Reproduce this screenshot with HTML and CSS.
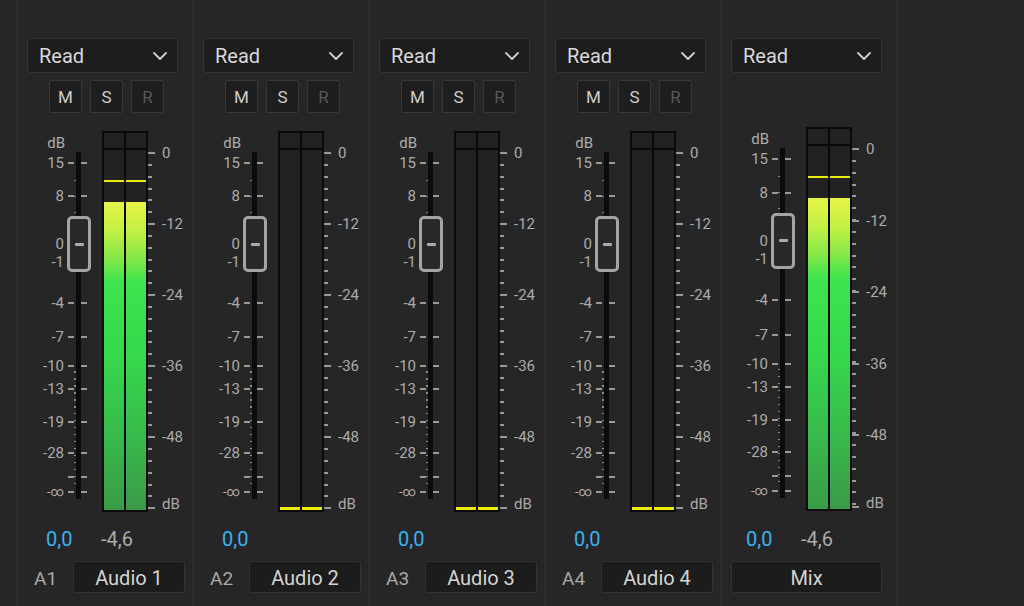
FILE: index.html
```html
<!DOCTYPE html>
<html lang="en">
<head>
<meta charset="utf-8">
<title>Audio Track Mixer</title>
<link rel="stylesheet" href="styles.css">
</head>
<body>
<div class="mixer">
  <div class="gutter"></div>

  <!-- Audio 1 -->
  <section class="channel">
    <div class="mode"><span>Read</span><svg class="chev" width="14" height="8" viewBox="0 0 14 8"><polyline points="1,1 7,7 13,1"/></svg></div>
    <div class="msr"><span class="btn">M</span><span class="btn">S</span><span class="btn dim">R</span></div>
    <div class="strip">
      <span class="fdb">dB</span>
      <i class="dots d1"></i><i class="dots d2"></i>
      <div class="fm p15"><span>15</span></div>
      <div class="fm p8"><span>8</span></div>
      <div class="fm p0"><span>0</span></div>
      <div class="fm pm1"><span>-1</span></div>
      <div class="fm pm4"><span>-4</span></div>
      <div class="fm pm7"><span>-7</span></div>
      <div class="fm pm10"><span>-10</span></div>
      <div class="fm pm13"><span>-13</span></div>
      <div class="fm pm19"><span>-19</span></div>
      <div class="fm pm28"><span>-28</span></div>
      <div class="fm px"><span></span></div>
      <div class="fm pinf"><span>-∞</span></div>
      <div class="track"></div>
      <div class="handle"><i></i></div>
      <div class="meter">
        <div class="mh"><i></i><i></i></div>
        <div class="mb">
          <div class="bar"><i class="fill"></i><i class="peak"></i></div>
          <div class="bar"><i class="fill"></i><i class="peak"></i></div>
        </div>
      </div>
      <div class="rscale">
        <i class="minor"></i>
        <div class="rm r0"><span>0</span></div>
        <div class="rm r12"><span>-12</span></div>
        <div class="rm r24"><span>-24</span></div>
        <div class="rm r36"><span>-36</span></div>
        <div class="rm r48"><span>-48</span></div>
        <div class="rm rdb"><span>dB</span></div>
      </div>
    </div>
    <div class="vals"><span class="gain">0,0</span><span class="lvl">-4,6</span></div>
    <div class="name"><span class="id">A1</span><span class="label">Audio 1</span></div>
  </section>

  <!-- Audio 2 -->
  <section class="channel">
    <div class="mode"><span>Read</span><svg class="chev" width="14" height="8" viewBox="0 0 14 8"><polyline points="1,1 7,7 13,1"/></svg></div>
    <div class="msr"><span class="btn">M</span><span class="btn">S</span><span class="btn dim">R</span></div>
    <div class="strip">
      <span class="fdb">dB</span>
      <i class="dots d1"></i><i class="dots d2"></i>
      <div class="fm p15"><span>15</span></div>
      <div class="fm p8"><span>8</span></div>
      <div class="fm p0"><span>0</span></div>
      <div class="fm pm1"><span>-1</span></div>
      <div class="fm pm4"><span>-4</span></div>
      <div class="fm pm7"><span>-7</span></div>
      <div class="fm pm10"><span>-10</span></div>
      <div class="fm pm13"><span>-13</span></div>
      <div class="fm pm19"><span>-19</span></div>
      <div class="fm pm28"><span>-28</span></div>
      <div class="fm px"><span></span></div>
      <div class="fm pinf"><span>-∞</span></div>
      <div class="track"></div>
      <div class="handle"><i></i></div>
      <div class="meter">
        <div class="mh"><i></i><i></i></div>
        <div class="mb">
          <div class="bar"><i class="peak low"></i></div>
          <div class="bar"><i class="peak low"></i></div>
        </div>
      </div>
      <div class="rscale">
        <i class="minor"></i>
        <div class="rm r0"><span>0</span></div>
        <div class="rm r12"><span>-12</span></div>
        <div class="rm r24"><span>-24</span></div>
        <div class="rm r36"><span>-36</span></div>
        <div class="rm r48"><span>-48</span></div>
        <div class="rm rdb"><span>dB</span></div>
      </div>
    </div>
    <div class="vals"><span class="gain">0,0</span></div>
    <div class="name"><span class="id">A2</span><span class="label">Audio 2</span></div>
  </section>

  <!-- Audio 3 -->
  <section class="channel">
    <div class="mode"><span>Read</span><svg class="chev" width="14" height="8" viewBox="0 0 14 8"><polyline points="1,1 7,7 13,1"/></svg></div>
    <div class="msr"><span class="btn">M</span><span class="btn">S</span><span class="btn dim">R</span></div>
    <div class="strip">
      <span class="fdb">dB</span>
      <i class="dots d1"></i><i class="dots d2"></i>
      <div class="fm p15"><span>15</span></div>
      <div class="fm p8"><span>8</span></div>
      <div class="fm p0"><span>0</span></div>
      <div class="fm pm1"><span>-1</span></div>
      <div class="fm pm4"><span>-4</span></div>
      <div class="fm pm7"><span>-7</span></div>
      <div class="fm pm10"><span>-10</span></div>
      <div class="fm pm13"><span>-13</span></div>
      <div class="fm pm19"><span>-19</span></div>
      <div class="fm pm28"><span>-28</span></div>
      <div class="fm px"><span></span></div>
      <div class="fm pinf"><span>-∞</span></div>
      <div class="track"></div>
      <div class="handle"><i></i></div>
      <div class="meter">
        <div class="mh"><i></i><i></i></div>
        <div class="mb">
          <div class="bar"><i class="peak low"></i></div>
          <div class="bar"><i class="peak low"></i></div>
        </div>
      </div>
      <div class="rscale">
        <i class="minor"></i>
        <div class="rm r0"><span>0</span></div>
        <div class="rm r12"><span>-12</span></div>
        <div class="rm r24"><span>-24</span></div>
        <div class="rm r36"><span>-36</span></div>
        <div class="rm r48"><span>-48</span></div>
        <div class="rm rdb"><span>dB</span></div>
      </div>
    </div>
    <div class="vals"><span class="gain">0,0</span></div>
    <div class="name"><span class="id">A3</span><span class="label">Audio 3</span></div>
  </section>

  <!-- Audio 4 -->
  <section class="channel">
    <div class="mode"><span>Read</span><svg class="chev" width="14" height="8" viewBox="0 0 14 8"><polyline points="1,1 7,7 13,1"/></svg></div>
    <div class="msr"><span class="btn">M</span><span class="btn">S</span><span class="btn dim">R</span></div>
    <div class="strip">
      <span class="fdb">dB</span>
      <i class="dots d1"></i><i class="dots d2"></i>
      <div class="fm p15"><span>15</span></div>
      <div class="fm p8"><span>8</span></div>
      <div class="fm p0"><span>0</span></div>
      <div class="fm pm1"><span>-1</span></div>
      <div class="fm pm4"><span>-4</span></div>
      <div class="fm pm7"><span>-7</span></div>
      <div class="fm pm10"><span>-10</span></div>
      <div class="fm pm13"><span>-13</span></div>
      <div class="fm pm19"><span>-19</span></div>
      <div class="fm pm28"><span>-28</span></div>
      <div class="fm px"><span></span></div>
      <div class="fm pinf"><span>-∞</span></div>
      <div class="track"></div>
      <div class="handle"><i></i></div>
      <div class="meter">
        <div class="mh"><i></i><i></i></div>
        <div class="mb">
          <div class="bar"><i class="peak low"></i></div>
          <div class="bar"><i class="peak low"></i></div>
        </div>
      </div>
      <div class="rscale">
        <i class="minor"></i>
        <div class="rm r0"><span>0</span></div>
        <div class="rm r12"><span>-12</span></div>
        <div class="rm r24"><span>-24</span></div>
        <div class="rm r36"><span>-36</span></div>
        <div class="rm r48"><span>-48</span></div>
        <div class="rm rdb"><span>dB</span></div>
      </div>
    </div>
    <div class="vals"><span class="gain">0,0</span></div>
    <div class="name"><span class="id">A4</span><span class="label">Audio 4</span></div>
  </section>

  <!-- Mix -->
  <section class="channel mix">
    <div class="mode"><span>Read</span><svg class="chev" width="14" height="8" viewBox="0 0 14 8"><polyline points="1,1 7,7 13,1"/></svg></div>
    <div class="strip">
      <span class="fdb">dB</span>
      <i class="dots d1"></i><i class="dots d2"></i>
      <div class="fm p15"><span>15</span></div>
      <div class="fm p8"><span>8</span></div>
      <div class="fm p0"><span>0</span></div>
      <div class="fm pm1"><span>-1</span></div>
      <div class="fm pm4"><span>-4</span></div>
      <div class="fm pm7"><span>-7</span></div>
      <div class="fm pm10"><span>-10</span></div>
      <div class="fm pm13"><span>-13</span></div>
      <div class="fm pm19"><span>-19</span></div>
      <div class="fm pm28"><span>-28</span></div>
      <div class="fm px"><span></span></div>
      <div class="fm pinf"><span>-∞</span></div>
      <div class="track"></div>
      <div class="handle"><i></i></div>
      <div class="meter">
        <div class="mh"><i></i><i></i></div>
        <div class="mb">
          <div class="bar"><i class="fill"></i><i class="peak"></i></div>
          <div class="bar"><i class="fill"></i><i class="peak"></i></div>
        </div>
      </div>
      <div class="rscale">
        <i class="minor"></i>
        <div class="rm r0"><span>0</span></div>
        <div class="rm r12"><span>-12</span></div>
        <div class="rm r24"><span>-24</span></div>
        <div class="rm r36"><span>-36</span></div>
        <div class="rm r48"><span>-48</span></div>
        <div class="rm rdb"><span>dB</span></div>
      </div>
    </div>
    <div class="vals"><span class="gain">0,0</span><span class="lvl">-4,6</span></div>
    <div class="name"><span class="label">Mix</span></div>
  </section>

  <div class="filler"></div>
</div>
</body>
</html>
```

FILE: styles.css
```css
* { box-sizing: border-box; margin: 0; padding: 0; }

html, body {
  width: 1024px;
  height: 606px;
  overflow: hidden;
}

body {
  background: #262626;
  font-family: Roboto, "Liberation Sans", sans-serif;
  color: #c8c8c8;
}

.mixer {
  display: flex;
  height: 606px;
}

.gutter {
  width: 18px;
  border-right: 1px solid #313131;
}

.channel {
  width: 176px;
  flex: none;
  border-right: 1px solid #313131;
  display: flex;
  flex-direction: column;
  padding-top: 38px;
}

.filler { flex: 1; }

/* automation mode dropdown */
.mode {
  margin-left: 9px;
  width: 151px;
  height: 35px;
  background: #1d1d1d;
  border: 1px solid #343434;
  border-radius: 3px;
  display: flex;
  align-items: center;
  justify-content: space-between;
  padding: 0 10px 0 11px;
  font-size: 20px;
  color: #d8d8d8;
}

.chev polyline {
  fill: none;
  stroke: #cfcfcf;
  stroke-width: 1.8;
  stroke-linecap: round;
  stroke-linejoin: round;
}

/* mute / solo / record */
.msr {
  margin-top: 7px;
  padding-left: 31px;
  display: flex;
  gap: 8px;
}

.btn {
  width: 33px;
  height: 33px;
  background: #1e1e1e;
  border: 1px solid #383838;
  border-radius: 2px;
  display: flex;
  align-items: center;
  justify-content: center;
  font-size: 17px;
  color: #cdcdcd;
}

.btn.dim { color: #595959; }

/* fader + meter area (a scale canvas: marks sit at their dB value) */
.strip {
  position: relative;
  margin-top: 18px;
  height: 381px;
}

.mix .strip {
  margin-top: 54px;
  height: 384px;
}

.fdb {
  position: absolute;
  left: 0;
  width: 47px;
  top: 3.15%;
  height: 16px;
  margin-top: -8px;
  line-height: 16px;
  text-align: right;
  font-size: 15px;
  color: #ababab;
}

.fm {
  position: absolute;
  left: 0;
  height: 16px;
  margin-top: -8px;
  display: flex;
  align-items: center;
  font-size: 15px;
  color: #ababab;
}

.fm span {
  width: 46px;
  text-align: right;
  line-height: 16px;
}

.fm::after {
  content: "";
  width: 19px;
  height: 2px;
  margin-left: 4px;
  background: linear-gradient(to right, #9a9a9a 0 6px, transparent 6px 13px, #9a9a9a 13px 19px);
}

.p15 { top: 8.40%; }
.p8 { top: 17.06%; }
.p0 { top: 29.66%; }
.pm1 { top: 34.38%; }
.pm4 { top: 45.14%; }
.pm7 { top: 54.07%; }
.pm10 { top: 61.68%; }
.pm13 { top: 67.72%; }
.pm19 { top: 76.38%; }
.pm28 { top: 84.51%; }
.px { top: 90.81%; }
.pinf { top: 94.75%; }
.pinf span { font-size: 13px; }

.dots {
  position: absolute;
  left: 56px;
  width: 2px;
}

.dots.d1 {
  top: 12.8%;
  height: 17%;
  background: repeating-linear-gradient(to bottom, #8c8c8c 0 1.5px, transparent 1.5px 16px);
}

.dots.d2 {
  top: 63%;
  height: 31%;
  background: repeating-linear-gradient(to bottom, #8c8c8c 0 1.5px, transparent 1.5px 7px);
}

.track {
  position: absolute;
  left: 58px;
  width: 5px;
  top: 5.51%;
  bottom: 3.41%;
  background: #0b0b0b;
}

.handle {
  position: absolute;
  left: 49px;
  top: calc(29.66% - 28px);
  width: 24px;
  height: 56px;
  border: 3px solid #a4a4a4;
  border-radius: 5px;
  background: #292929;
  display: flex;
  align-items: center;
  justify-content: center;
}

.handle i {
  width: 9px;
  height: 3px;
  border-radius: 1px;
  background: #ababab;
}

/* level meter */
.meter {
  position: absolute;
  left: 84px;
  top: 0;
  bottom: 0;
  width: 46px;
  border: 2px solid #0a0a0a;
  display: flex;
  flex-direction: column;
}

.mh {
  height: 17px;
  border-bottom: 2px solid #0a0a0a;
  display: flex;
  gap: 2px;
  background: #0a0a0a;
}

.mh i {
  flex: 1;
  background: #222;
}

.mb {
  flex: 1;
  display: flex;
  gap: 2px;
  background: #0a0a0a;
}

.bar {
  flex: 1;
  position: relative;
  background: #222;
}

.fill {
  position: absolute;
  left: 0;
  right: 0;
  bottom: 0;
  top: 14.4%;
  background: linear-gradient(to bottom,
    #e6f446 0%,
    #c4f044 9%,
    #86e848 18%,
    #3ee44e 26%,
    #36d84c 50%,
    #38b84a 78%,
    #3a9a46 100%);
}

.peak {
  position: absolute;
  left: 0;
  right: 0;
  top: 8.3%;
  height: 2px;
  background: #ecec00;
}

.peak.low {
  top: auto;
  bottom: 0;
  height: 3px;
}

/* meter dB scale */
.rscale {
  position: absolute;
  left: 130px;
  top: 0;
  bottom: 0;
  width: 46px;
}

.minor {
  position: absolute;
  left: 0;
  width: 4px;
  top: calc(5.77% - 1px);
  height: 93.18%;
  background: repeating-linear-gradient(to bottom, #9a9a9a 0 2px, transparent 2px 11.84px);
}

.rm {
  position: absolute;
  left: 0;
  height: 16px;
  margin-top: -8px;
  display: flex;
  align-items: center;
  font-size: 15px;
  color: #ababab;
  white-space: nowrap;
}

.rm::before {
  content: "";
  width: 7px;
  height: 2px;
  margin-right: 7px;
  background: #9a9a9a;
}

.rm span { line-height: 16px; }

.r0 { top: 5.77%; }
.r12 { top: 24.41%; }
.r24 { top: 43.04%; }
.r36 { top: 61.68%; }
.r48 { top: 80.31%; }
.rdb { top: 98.95%; }
.rdb span { transform: translateY(-4px); }

/* readouts */
.vals {
  margin-top: 15px;
  height: 24px;
  padding-left: 28px;
  display: flex;
  align-items: center;
  font-size: 20px;
}

.mix .vals {
  margin-top: 16px;
  padding-left: 24px;
}

.gain {
  width: 55px;
  color: #3ab2ef;
}

.lvl { color: #ababab; }

.name {
  margin-top: 10px;
  height: 32px;
  display: flex;
  align-items: center;
}

.id {
  width: 55px;
  padding-left: 16px;
  padding-top: 2px;
  font-size: 19px;
  color: #a8a8a8;
}

.label {
  width: 112px;
  height: 32px;
  background: #1c1c1c;
  border: 1px solid #333;
  border-radius: 3px;
  text-align: center;
  line-height: 31px;
  padding-top: 1px;
  font-size: 20px;
  color: #d4d4d4;
}

.mix .label {
  margin-left: 9px;
  width: 151px;
}
```
